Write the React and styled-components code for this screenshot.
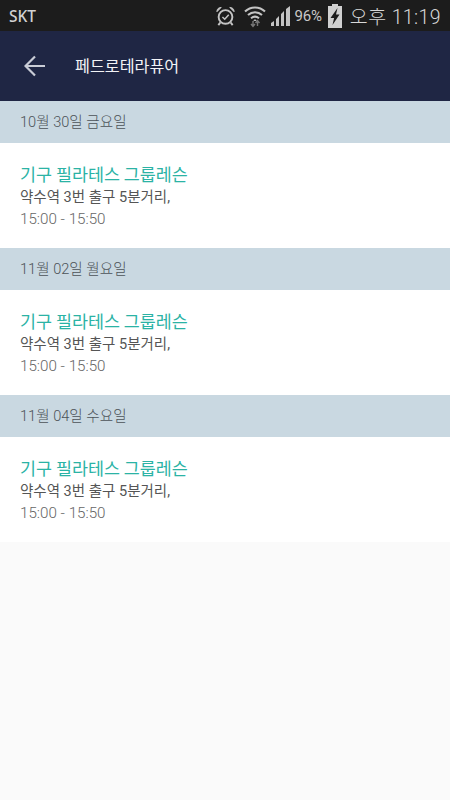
import React from "react";
import styled, { createGlobalStyle } from "styled-components";

const Global = createGlobalStyle`
  html, body { margin: 0; padding: 0; background: #fafafa; }
  body { font-family: Roboto, "Noto Sans CJK KR", sans-serif; }
`;
const Page = styled.div`width: 450px; height: 800px; background: #fafafa; overflow: hidden;`;
const StatusBar = styled.div`
  height: 31px; background: #1c1c1c; color: #cfcfcf; display: flex; align-items: center;
  padding: 0 9px; box-sizing: border-box;
`;
const Carrier = styled.span`font: 500 15.5px "Noto Sans", sans-serif; color: #d2d2d2;`;
const StatusRight = styled.div`margin-left: auto; display: flex; align-items: center;`;
const Gap = styled.span`width: ${(p) => p.$w}px;`;
const Battery = styled.span`font: 400 15px Roboto, sans-serif; color: #c8c8c8; margin-left: 3px; letter-spacing: -0.2px;`;
const Clock = styled.span`font: 300 19.5px Roboto, "Noto Sans CJK KR", sans-serif; color: #d8d8d8; margin-left: 7px; letter-spacing: 0.4px;`;
const AppBar = styled.header`
  height: 70px; background: #1f2644; display: flex; align-items: center; padding-left: 24px; box-sizing: border-box;
`;
const BackButton = styled.div`width: 22px; height: 22px; display: flex; margin-right: 29px;`;
const Title = styled.h1`margin: 0 0 2px; font: 400 16.2px "Noto Sans CJK KR", sans-serif; color: #f2f3f6; letter-spacing: 0;`;
const DateHeader = styled.div`
  height: 42px; background: #c9d8e1; color: #4c5358; display: flex; align-items: center;
  padding: 0 0 4px 20px; box-sizing: border-box; font: 300 14.6px Roboto, "Noto Sans CJK KR", sans-serif;
`;
const Card = styled.div`
  height: 105px; background: #fff; box-sizing: border-box; padding: 19px 20px 0;
`;
const ClassName = styled.div`color: #2bb3a5; font: 400 17.4px/24px "Noto Sans CJK KR", sans-serif;`;
const Place = styled.div`color: #555; font: 400 14.5px/22px Roboto, "Noto Sans CJK KR", sans-serif; padding-top: 1px;`;
const Time = styled.div`color: #666; font: 300 15.2px/20px Roboto, sans-serif;`;

const Alarm = () => (
  <svg width="21" height="22" viewBox="0 0 22 22" fill="none" stroke="#c4c4c4">
    <circle cx="11" cy="12" r="7.2" strokeWidth="2" />
    <path d="M7.8 12l2.4 2.4 4.2-4.6" strokeWidth="1.6" />
    <path d="M2 6.5C2 3.5 4 2 6.5 2zM20 6.5C20 3.5 18 2 15.5 2z" fill="#c4c4c4" strokeWidth="1" />
    <path d="M5.5 18l-2 2.5M16.5 18l2 2.5" strokeWidth="2" />
  </svg>
);
const Wifi = () => (
  <svg width="22" height="24" viewBox="0 0 22 24" fill="none" stroke="#c4c4c4" strokeWidth="2">
    <path d="M1 7.5C6.5 2 15.5 2 21 7.5" />
    <path d="M4 11c4-3.8 10-3.8 14 0" />
    <path d="M7 14.3c2.4-2 5.6-2 8 0" />
    <path d="M9.5 17l1.5-1.3 1.5 1.3" strokeWidth="1" fill="#c4c4c4" />
    <path d="M9 17v5M7 20l2 2.4L11 20" stroke="#777" strokeWidth="1.4" />
    <path d="M13.5 22v-5M11.5 19l2-2.4 2 2.4" stroke="#777" strokeWidth="1.4" />
  </svg>
);
const Signal = () => (
  <svg width="22" height="22" viewBox="0 0 22 22" fill="#c4c4c4">
    <path d="M1 18l3-2v5H1zM6 14l3-3v10H6zM11 9l3-3v15h-3zM16 4l4-3v20h-4z" />
  </svg>
);
const BatteryIcon = () => (
  <svg width="16" height="26" viewBox="0 0 16 26" style={{ marginLeft: 5 }}>
    <path d="M5 1h6v2h4v22H1V3h4z" fill="#d0d0d0" />
    <path d="M10.5 5L3.5 15h3.6L5.5 22l7-10.5H9z" fill="#1c1c1c" />
  </svg>
);

const entries = ["10월 30일 금요일", "11월 02일 월요일", "11월 04일 수요일"];

export default function App() {
  return (
    <Page>
      <Global />
      <StatusBar>
        <Carrier>SKT</Carrier>
        <StatusRight>
          <Alarm />
          <Gap $w={8} />
          <Wifi />
          <Gap $w={4} />
          <Signal />
          <Battery>96%</Battery>
          <BatteryIcon />
          <Clock>오후 11:19</Clock>
        </StatusRight>
      </StatusBar>
      <AppBar>
        <BackButton>
          <svg width="22" height="22" viewBox="0 0 22 22" fill="none" stroke="#c9ccd6" strokeWidth="2.2">
            <path d="M21 11H2M11 1.5L1.5 11l9.5 9.5" />
          </svg>
        </BackButton>
        <Title>페드로테라퓨어</Title>
      </AppBar>
      {entries.map((d) => (
        <section key={d}>
          <DateHeader>{d}</DateHeader>
          <Card>
            <ClassName>기구 필라테스 그룹레슨</ClassName>
            <Place>약수역 3번 출구 5분거리,</Place>
            <Time>15:00 - 15:50</Time>
          </Card>
        </section>
      ))}
    </Page>
  );
}
